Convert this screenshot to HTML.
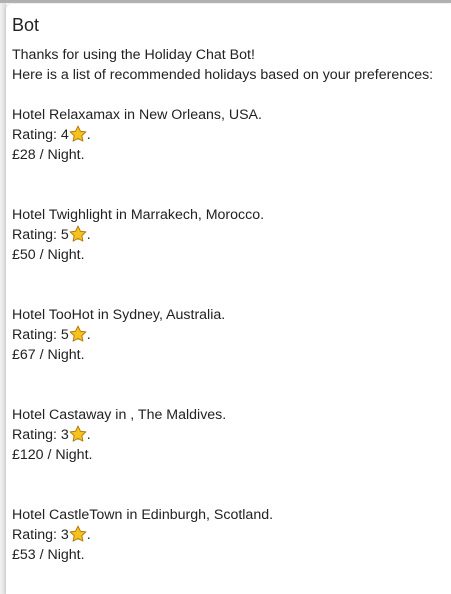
<!DOCTYPE html>
<html><head><style>
html,body{margin:0;padding:0;width:451px;height:594px;overflow:hidden;background:#fff;}
body{font-family:"Liberation Sans",Arial,sans-serif;color:#222;position:relative;}
.top{position:absolute;left:0;top:0;width:451px;height:3px;background:#b0b0b0;}
.left{position:absolute;left:0;top:3px;width:6px;height:591px;background:linear-gradient(to right,#f2f2f2,#dcdcdc);}
.card{position:absolute;left:6px;top:4px;width:445px;height:590px;background:#fff;border-top-left-radius:5px;box-shadow:-1px 0 2px #ccc;}
.h{position:absolute;left:12px;top:15px;font-size:18px;color:#222;}
.t{position:absolute;left:12px;top:45px;font-size:14.2px;line-height:20px;}
.star{display:inline-block;width:18px;height:18px;vertical-align:-4px;}
p{margin:0;white-space:nowrap}
</style></head><body>
<div class="top"></div><div class="left"></div><div class="card"></div>
<div class="h">Bot</div>
<div class="t">
<p>Thanks for using the Holiday Chat Bot!</p>
<p>Here is a list of recommended holidays based on your preferences:</p>
<p>&nbsp;</p>
<p>Hotel Relaxamax in New Orleans, USA.</p>
<p>Rating: 4<svg class="star" viewBox="0 0 24 24"><path d="M12 1.5l3.2 6.8 7.3.9-5.4 5 1.4 7.3L12 17.9l-6.5 3.6 1.4-7.3-5.4-5 7.3-.9z" fill="#f8c21c" stroke="#b07a10" stroke-width="1.3" stroke-linejoin="round"/></svg>.</p>
<p>£28 / Night.</p>
<p>&nbsp;</p><p>&nbsp;</p>
<p>Hotel Twighlight in Marrakech, Morocco.</p>
<p>Rating: 5<svg class="star" viewBox="0 0 24 24"><path d="M12 1.5l3.2 6.8 7.3.9-5.4 5 1.4 7.3L12 17.9l-6.5 3.6 1.4-7.3-5.4-5 7.3-.9z" fill="#f8c21c" stroke="#b07a10" stroke-width="1.3" stroke-linejoin="round"/></svg>.</p>
<p>£50 / Night.</p>
<p>&nbsp;</p><p>&nbsp;</p>
<p>Hotel TooHot in Sydney, Australia.</p>
<p>Rating: 5<svg class="star" viewBox="0 0 24 24"><path d="M12 1.5l3.2 6.8 7.3.9-5.4 5 1.4 7.3L12 17.9l-6.5 3.6 1.4-7.3-5.4-5 7.3-.9z" fill="#f8c21c" stroke="#b07a10" stroke-width="1.3" stroke-linejoin="round"/></svg>.</p>
<p>£67 / Night.</p>
<p>&nbsp;</p><p>&nbsp;</p>
<p>Hotel Castaway in , The Maldives.</p>
<p>Rating: 3<svg class="star" viewBox="0 0 24 24"><path d="M12 1.5l3.2 6.8 7.3.9-5.4 5 1.4 7.3L12 17.9l-6.5 3.6 1.4-7.3-5.4-5 7.3-.9z" fill="#f8c21c" stroke="#b07a10" stroke-width="1.3" stroke-linejoin="round"/></svg>.</p>
<p>£120 / Night.</p>
<p>&nbsp;</p><p>&nbsp;</p>
<p>Hotel CastleTown in Edinburgh, Scotland.</p>
<p>Rating: 3<svg class="star" viewBox="0 0 24 24"><path d="M12 1.5l3.2 6.8 7.3.9-5.4 5 1.4 7.3L12 17.9l-6.5 3.6 1.4-7.3-5.4-5 7.3-.9z" fill="#f8c21c" stroke="#b07a10" stroke-width="1.3" stroke-linejoin="round"/></svg>.</p>
<p>£53 / Night.</p>
</div>
</body></html>
